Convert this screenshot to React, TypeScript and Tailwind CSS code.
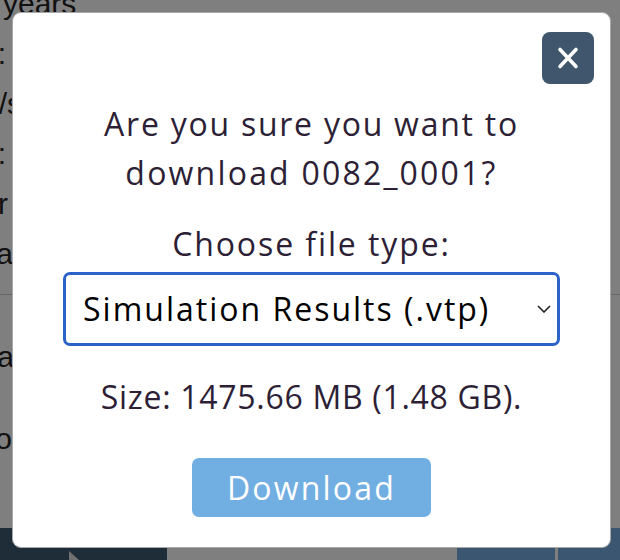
import React from "react";

const bgFont = { fontFamily: '"Liberation Sans", Arial, sans-serif' };

function BgRow({ text, end }: { text: string; end: number }) {
  return (
    <div className="flex h-[50px] items-end">
      <div className="flex justify-end whitespace-nowrap" style={{ width: end }}>
        <span className="leading-[36px]">{text}</span>
      </div>
    </div>
  );
}

export default function App() {
  return (
    <div className="relative h-[560px] w-[620px] overflow-hidden bg-white">
      {/* background page */}
      <div className="flex h-full flex-col text-[30px] text-[#222]" style={bgFont}>
        <div className="-mt-[14px] flex flex-col">
          <div className="flex h-[36px] items-end pl-[3px] whitespace-nowrap">
            <span className="leading-[36px]">years</span>
          </div>
          <BgRow text="Ht:" end={6} />
          <BgRow text="km/s" end={22} />
          <BgRow text="Wt:" end={6} />
          <BgRow text="Gender" end={8} />
          <BgRow text="Area" end={13} />
        </div>
        <div className="mt-[22px] h-px w-full bg-[#cfcfcf]" />
        <div className="mt-[44px] flex justify-end whitespace-nowrap w-[14px]">
          <span className="leading-[36px]">Data</span>
        </div>
        <div className="mt-[46px] flex justify-end whitespace-nowrap w-[12px]">
          <span className="leading-[36px]">Info</span>
        </div>
        <div className="mt-auto flex h-[32px] w-full">
          <div className="relative w-[167px] bg-[#3e5a70]">
            <svg className="absolute left-[68px] top-[23px]" width="16" height="9" viewBox="0 0 16 9">
              <path d="M1 0 L11 9 L1 9 Z" fill="#e0e0e0" />
            </svg>
          </div>
          <div className="w-[290px] bg-white" />
          <div className="flex flex-1 bg-[#74ace0]">
            <div className="w-[98px]" />
            <div className="w-[3px] bg-white" />
          </div>
        </div>
      </div>

      {/* overlay */}
      <div className="absolute inset-0 bg-black/50 p-[12px]">
        <div
          className="flex h-[536px] w-[599px] flex-col items-center rounded-[9px] border border-[#a8a8a8] bg-white text-[#2d1f35]"
          style={{ fontFamily: '"Open Sans", "Noto Sans", sans-serif' }}
        >
          <div className="flex w-full justify-end pr-[16px] pt-[19px]">
            <button className="flex h-[52px] w-[52px] items-center justify-center rounded-[8px] bg-[#3f566c]">
              <svg width="24" height="24" viewBox="0 0 24 24">
                <path d="M4 3.5 L20 20.5 M20 3.5 L4 20.5" stroke="white" strokeWidth="3.6" strokeLinecap="round" />
              </svg>
            </button>
          </div>
          <div className="mt-[15px] text-center text-[32px] leading-[49px]">
            <div className="tracking-[1.75px]">Are you sure you want to</div>
            <div className="tracking-[2.2px]">download 0082_0001?</div>
          </div>
          <div className="mt-[22px] text-[32px] leading-[49px] tracking-[1.9px]">Choose file type:</div>
          <div className="relative mt-[4px] h-[74px] w-[497px]">
            <select
              defaultValue="vtp"
              className="h-full w-full appearance-none rounded-[7px] border-[3px] border-[#2a62c9] bg-white pl-[17px] text-[32px] tracking-[2px] text-black outline-none"
              style={{ fontFamily: '"Open Sans", "Noto Sans", sans-serif' }}
            >
              <option value="vtp">Simulation Results (.vtp)</option>
              <option value="vtu">Simulation Results (.vtu)</option>
            </select>
            <svg className="pointer-events-none absolute right-[9px] top-[33px]" width="14" height="8" viewBox="0 0 14 8">
              <path d="M1 1 L7 7 L13 1" stroke="#222" strokeWidth="1.6" fill="none" />
            </svg>
          </div>
          <div className="mt-[26px] text-[32px] leading-[49px] tracking-[0.7px]">Size: 1475.66 MB (1.48 GB).</div>
          <button className="mt-[37px] flex h-[59px] w-[239px] items-center justify-center rounded-[7px] bg-[#71aee2] text-[32px] tracking-[2.2px] text-white">
            Download
          </button>
        </div>
      </div>
    </div>
  );
}
